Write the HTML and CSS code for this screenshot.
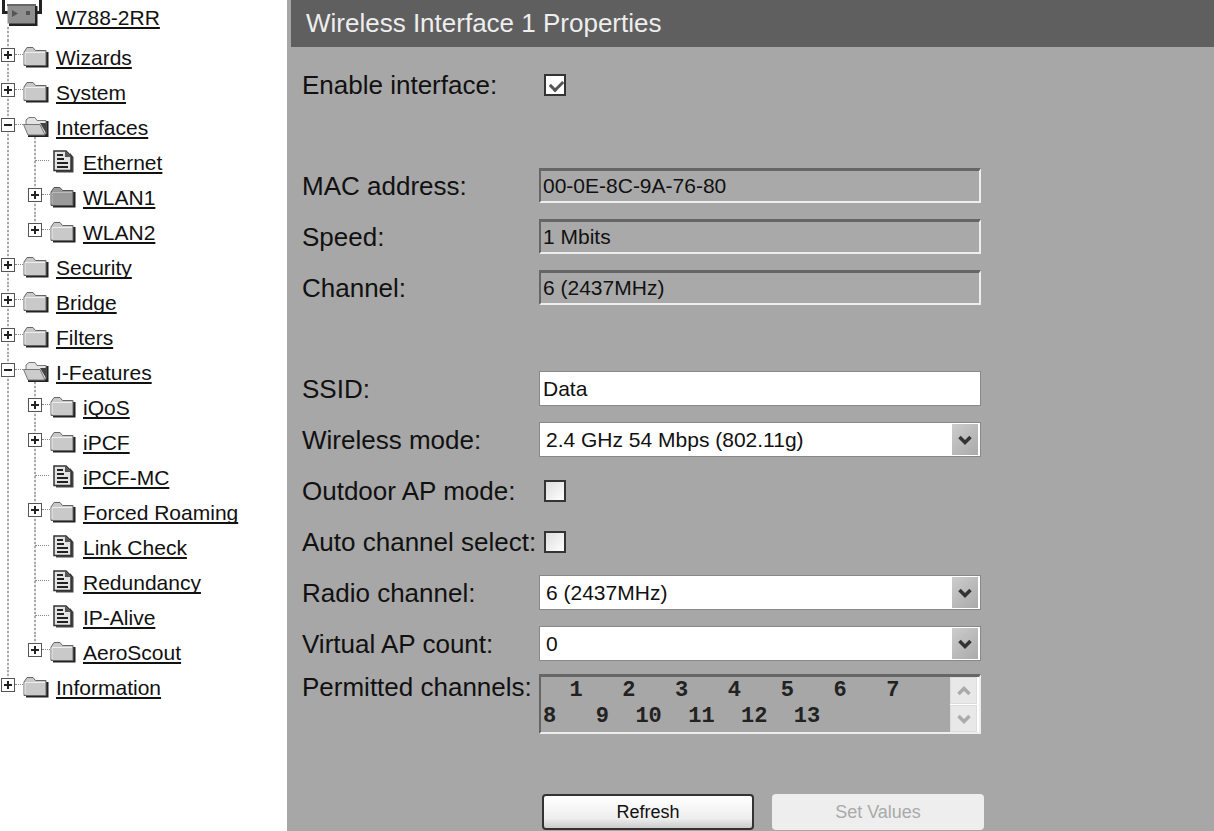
FILE: index.html
```html
<!DOCTYPE html>
<html lang="en">
<head>
    <meta charset="UTF-8">
    <meta name="viewport" content="width=device-width, initial-scale=1.0">
    <title>Wireless Interface 1 Properties</title>
    <link rel="stylesheet" href="styles.css">
</head>
<body>
    <!-- shared icons -->
    <svg class="defs" width="0" height="0">
        <symbol id="folder" viewBox="0 0 26 22">
            <path d="M3 21.5H25.5V6H23V19H3Z" fill="#222"/>
            <path d="M1 6L4 1.500H10L12.500 4.500H23V19.500H1Z" fill="#c9c9c9" stroke="#666"/>
            <path d="M2 18V6.500H22" fill="none" stroke="#eee"/>
        </symbol>
        <symbol id="folder-dark" viewBox="0 0 26 22">
            <path d="M3 21.5H25.5V6H23V19H3Z" fill="#222"/>
            <path d="M1 6L4 1.500H10L12.500 4.500H23V19.500H1Z" fill="#9a9a9a" stroke="#555"/>
            <path d="M2 18V6.500H22" fill="none" stroke="#bbb"/>
        </symbol>
        <symbol id="folder-open" viewBox="0 0 26 22">
            <path d="M5 21H25.500V5H22V18H5Z" fill="#222"/>
            <path d="M3 9V4L6 1.500H12L14 4.500H23V18H6Z" fill="#e4e4e4" stroke="#777"/>
            <path d="M.5 8.500H17L22 19H5Z" fill="#ccc" stroke="#777"/>
            <path d="M17 7H23V17Z" fill="#444"/>
        </symbol>
        <symbol id="doc" viewBox="0 0 21 23">
            <path d="M3 22.500H20.500V7L17 3V20H3Z" fill="#444"/>
            <path d="M1 1H13L18 6V20.500H1Z" fill="#e4e4e4" stroke="#333" stroke-width="1.500"/>
            <path d="M12 1V7H18Z" fill="#555"/>
            <path d="M4 5H10M4 9H11M4 13H15M4 17H15" stroke="#222" stroke-width="2"/>
        </symbol>
        <symbol id="chevron" viewBox="0 0 14 10">
            <path d="M1.500 2L7 7.500L12.500 2" fill="none" stroke="currentColor" stroke-width="3.500"/>
        </symbol>
    </svg>

    <div class="layout">
        <nav class="sidebar">
            <div class="row device">
                <svg class="device-icon" viewBox="0 0 42 27">
                    <path d="M3.500 0V12.500H8M40.500 0V12.500H36" fill="none" stroke="#222" stroke-width="3"/>
                    <path d="M9 6H37.500V26H9Z" fill="#222"/>
                    <path d="M7.500 5H35V23.500H7.500Z" fill="#8f8f8f"/>
                    <path d="M7 5H36" stroke="#666" stroke-width="2"/>
                    <path d="M12 10L18 13.500L12 17Z" fill="#555"/>
                    <path d="M26 13H30" stroke="#555" stroke-width="4"/>
                </svg>
                <a href="#">W788-2RR</a>
            </div>
            <ul class="tree">
                <li><div class="row"><button class="toggle" aria-label="Expand"></button><span class="dash"></span><svg class="folder"><use href="#folder"/></svg><a href="#">Wizards</a></div></li>
                <li><div class="row"><button class="toggle" aria-label="Expand"></button><span class="dash"></span><svg class="folder"><use href="#folder"/></svg><a href="#">System</a></div></li>
                <li>
                    <div class="row open"><button class="toggle" aria-label="Collapse"></button><span class="dash"></span><svg class="folder"><use href="#folder-open"/></svg><a href="#">Interfaces</a></div>
                    <ul class="tree">
                        <li><div class="row leaf"><span class="dash"></span><svg class="doc"><use href="#doc"/></svg><a href="#">Ethernet</a></div></li>
                        <li><div class="row"><button class="toggle" aria-label="Expand"></button><span class="dash"></span><svg class="folder"><use href="#folder-dark"/></svg><a href="#">WLAN1</a></div></li>
                        <li><div class="row"><button class="toggle" aria-label="Expand"></button><span class="dash"></span><svg class="folder"><use href="#folder"/></svg><a href="#">WLAN2</a></div></li>
                    </ul>
                </li>
                <li><div class="row"><button class="toggle" aria-label="Expand"></button><span class="dash"></span><svg class="folder"><use href="#folder"/></svg><a href="#">Security</a></div></li>
                <li><div class="row"><button class="toggle" aria-label="Expand"></button><span class="dash"></span><svg class="folder"><use href="#folder"/></svg><a href="#">Bridge</a></div></li>
                <li><div class="row"><button class="toggle" aria-label="Expand"></button><span class="dash"></span><svg class="folder"><use href="#folder"/></svg><a href="#">Filters</a></div></li>
                <li>
                    <div class="row open"><button class="toggle" aria-label="Collapse"></button><span class="dash"></span><svg class="folder"><use href="#folder-open"/></svg><a href="#">I-Features</a></div>
                    <ul class="tree">
                        <li><div class="row"><button class="toggle" aria-label="Expand"></button><span class="dash"></span><svg class="folder"><use href="#folder"/></svg><a href="#">iQoS</a></div></li>
                        <li><div class="row"><button class="toggle" aria-label="Expand"></button><span class="dash"></span><svg class="folder"><use href="#folder"/></svg><a href="#">iPCF</a></div></li>
                        <li><div class="row leaf"><span class="dash"></span><svg class="doc"><use href="#doc"/></svg><a href="#">iPCF-MC</a></div></li>
                        <li><div class="row"><button class="toggle" aria-label="Expand"></button><span class="dash"></span><svg class="folder"><use href="#folder"/></svg><a href="#">Forced Roaming</a></div></li>
                        <li><div class="row leaf"><span class="dash"></span><svg class="doc"><use href="#doc"/></svg><a href="#">Link Check</a></div></li>
                        <li><div class="row leaf"><span class="dash"></span><svg class="doc"><use href="#doc"/></svg><a href="#">Redundancy</a></div></li>
                        <li><div class="row leaf"><span class="dash"></span><svg class="doc"><use href="#doc"/></svg><a href="#">IP-Alive</a></div></li>
                        <li><div class="row"><button class="toggle" aria-label="Expand"></button><span class="dash"></span><svg class="folder"><use href="#folder"/></svg><a href="#">AeroScout</a></div></li>
                    </ul>
                </li>
                <li><div class="row"><button class="toggle" aria-label="Expand"></button><span class="dash"></span><svg class="folder"><use href="#folder"/></svg><a href="#">Information</a></div></li>
            </ul>
        </nav>

        <main class="content">
            <h1 class="title">Wireless Interface 1 Properties</h1>
            <form class="form">
                <div class="field section-end">
                    <label for="enable">Enable interface:</label>
                    <input type="checkbox" id="enable" checked>
                </div>
                <div class="field">
                    <label for="mac">MAC address:</label>
                    <input type="text" id="mac" value="00-0E-8C-9A-76-80" readonly>
                </div>
                <div class="field">
                    <label for="speed">Speed:</label>
                    <input type="text" id="speed" value="1 Mbits" readonly>
                </div>
                <div class="field section-end">
                    <label for="channel">Channel:</label>
                    <input type="text" id="channel" value="6 (2437MHz)" readonly>
                </div>
                <div class="field">
                    <label for="ssid">SSID:</label>
                    <input type="text" id="ssid" value="Data">
                </div>
                <div class="field">
                    <label for="mode">Wireless mode:</label>
                    <div class="select">
                        <select id="mode"><option>2.4 GHz 54 Mbps (802.11g)</option></select>
                        <span class="arrow"><svg><use href="#chevron"/></svg></span>
                    </div>
                </div>
                <div class="field">
                    <label for="outdoor">Outdoor AP mode:</label>
                    <input type="checkbox" id="outdoor">
                </div>
                <div class="field">
                    <label for="auto">Auto channel select:</label>
                    <input type="checkbox" id="auto">
                </div>
                <div class="field">
                    <label for="radio">Radio channel:</label>
                    <div class="select">
                        <select id="radio"><option>6 (2437MHz)</option></select>
                        <span class="arrow"><svg><use href="#chevron"/></svg></span>
                    </div>
                </div>
                <div class="field">
                    <label for="vap">Virtual AP count:</label>
                    <div class="select">
                        <select id="vap"><option>0</option></select>
                        <span class="arrow"><svg><use href="#chevron"/></svg></span>
                    </div>
                </div>
                <div class="field area">
                    <label for="permitted">Permitted channels:</label>
                    <div class="scrollbox">
                        <textarea id="permitted" rows="2" readonly>  1   2   3   4   5   6   7
8   9  10  11  12  13</textarea>
                        <div class="scrollbar">
                            <button type="button" class="up" aria-label="Scroll up" disabled><svg><use href="#chevron"/></svg></button>
                            <button type="button" aria-label="Scroll down" disabled><svg><use href="#chevron"/></svg></button>
                        </div>
                    </div>
                </div>
                <div class="actions">
                    <button type="button" class="btn">Refresh</button>
                    <button type="submit" class="btn" disabled>Set Values</button>
                </div>
            </form>
        </main>
    </div>
</body>
</html>
```
FILE: styles.css
```css
* {
    box-sizing: border-box;
}
body {
    margin: 0;
    background: #fff;
    color: #111;
    font-family: "Liberation Sans", Arial, sans-serif;
    font-size: 21px;
}
.defs {
    position: absolute;
}
.layout {
    display: flex;
    min-height: 100vh;
}

/* navigation tree */
.sidebar {
    flex: 0 0 287px;
}
.tree {
    list-style: none;
    margin: 0;
    padding: 0;
}
.tree .tree {
    margin-left: 27px;
}
.tree li {
    background: repeating-linear-gradient(#aaa 0 2px, #eee 2px 4px) 7px 0 / 2px 100% no-repeat;
}
.tree li:last-child {
    background-size: 2px 16px;
}
.row {
    display: flex;
    align-items: center;
    height: 35px;
    white-space: nowrap;
}
.row a {
    color: #111;
    text-decoration: underline;
    text-decoration-thickness: 2px;
    text-underline-offset: 2px;
    text-decoration-skip-ink: none;
}
.row.open {
    background: repeating-linear-gradient(#aaa 0 2px, #eee 2px 4px) 34px 27px / 2px 8px no-repeat;
}
.row.device {
    height: 40px;
    padding-bottom: 4px;
    background: repeating-linear-gradient(#aaa 0 2px, #eee 2px 4px) 7px 27px / 2px 13px no-repeat;
}
.device-icon {
    width: 42px;
    height: 27px;
    margin-right: 14px;
    align-self: flex-start;
}
.toggle {
    width: 14px;
    height: 14px;
    margin: 0 0 6px 1px;
    padding: 0;
    border: 1px solid #555;
    background:
        linear-gradient(#222, #222) center / 8px 2px no-repeat,
        linear-gradient(#222, #222) center / 2px 8px no-repeat,
        #fff;
}
.open .toggle {
    background: linear-gradient(#222, #222) center / 8px 2px no-repeat, #fff;
}
.dash {
    width: 8px;
    margin-bottom: 6px;
    border-top: 1px dotted #888;
}
.leaf .dash {
    width: 14px;
    margin: 0 4px 4px 8px;
}
.folder {
    width: 26px;
    height: 22px;
    margin: 0 7px 2px 0;
}
.doc {
    width: 21px;
    height: 23px;
    margin: 0 9px 2px 0;
}

/* properties panel */
.content {
    flex: 1;
    min-width: 0;
    background: #a7a7a7;
}
.title {
    margin: 0 0 0 4px;
    padding: 0 15px;
    background: #5f5f5f;
    color: #eee;
    font-size: 26px;
    font-weight: normal;
    line-height: 47px;
}
.form {
    padding: 12px 15px 0;
}
.field {
    display: grid;
    grid-template-columns: 237px minmax(0, 442px);
    align-items: center;
    min-height: 51px;
}
.field label {
    font-size: 26px;
    line-height: 30px;
    white-space: nowrap;
}
.section-end {
    margin-bottom: 50px;
}
input[type="text"],
select {
    width: 100%;
    height: 35px;
    margin: 0;
    padding: 0 3px;
    border: 1px solid #888;
    border-radius: 0;
    background: #fff;
    color: #111;
    font: inherit;
}
input[type="text"][readonly] {
    padding: 0 2px;
    border: solid;
    border-width: 3px 2px 2px;
    border-color: #666 #eee #eee #666;
    background: #a9a9a9;
}
input[type="checkbox"] {
    appearance: none;
    width: 22px;
    height: 22px;
    margin: 0 0 0 5px;
    border: 2px solid #333;
    background: linear-gradient(135deg, #ddd, #fff);
}
input[type="checkbox"]:checked {
    background: #fff;
}
input[type="checkbox"]:checked::before {
    content: "";
    display: block;
    width: 10px;
    height: 6px;
    margin: 4px;
    border: solid #555;
    border-width: 0 0 3px 3px;
    transform: rotate(-45deg);
}
.select {
    position: relative;
}
.select select {
    display: block;
    appearance: none;
    padding: 0 30px 0 6px;
}
.arrow {
    position: absolute;
    top: 2px;
    right: 3px;
    bottom: 2px;
    display: flex;
    align-items: center;
    justify-content: center;
    width: 26px;
    background: linear-gradient(135deg, #ccc, #aaa);
    color: #333;
    pointer-events: none;
}
.arrow svg,
.scrollbar svg {
    width: 14px;
    height: 10px;
}
.area {
    align-items: start;
    padding-top: 3px;
}
.scrollbox {
    display: flex;
    height: 60px;
    margin-top: 2px;
    border: solid;
    border-width: 3px 2px 2px;
    border-color: #666 #eee #eee #666;
}
.scrollbox textarea {
    flex: 1;
    min-width: 0;
    padding: 1px 2px;
    border: 0;
    outline: 0;
    resize: none;
    overflow: hidden;
    background: transparent;
    color: #222;
    font: bold 22px/26px "Liberation Mono", "Courier New", monospace;
    white-space: pre;
}
.scrollbar {
    display: flex;
    flex-direction: column;
    gap: 1px;
    width: 29px;
    padding-right: 2px;
    background: #fff;
}
.scrollbar button {
    flex: 1;
    display: flex;
    align-items: center;
    justify-content: center;
    padding: 0;
    border: 1px solid #ddd;
    background: #e8e8e8;
    color: #aaa;
}
.scrollbar .up svg {
    transform: scaleY(-1);
}
.actions {
    display: flex;
    gap: 18px;
    margin: 60px 0 0 240px;
}
.btn {
    width: 212px;
    height: 36px;
    padding: 0;
    border: 2px solid #333;
    border-radius: 4px;
    background: linear-gradient(#fff, #eee 70%, #ccc);
    color: #111;
    font: inherit;
    font-size: 18px;
}
.btn:disabled {
    border-color: #eee;
    background: #eee;
    color: #aaa;
}
```
